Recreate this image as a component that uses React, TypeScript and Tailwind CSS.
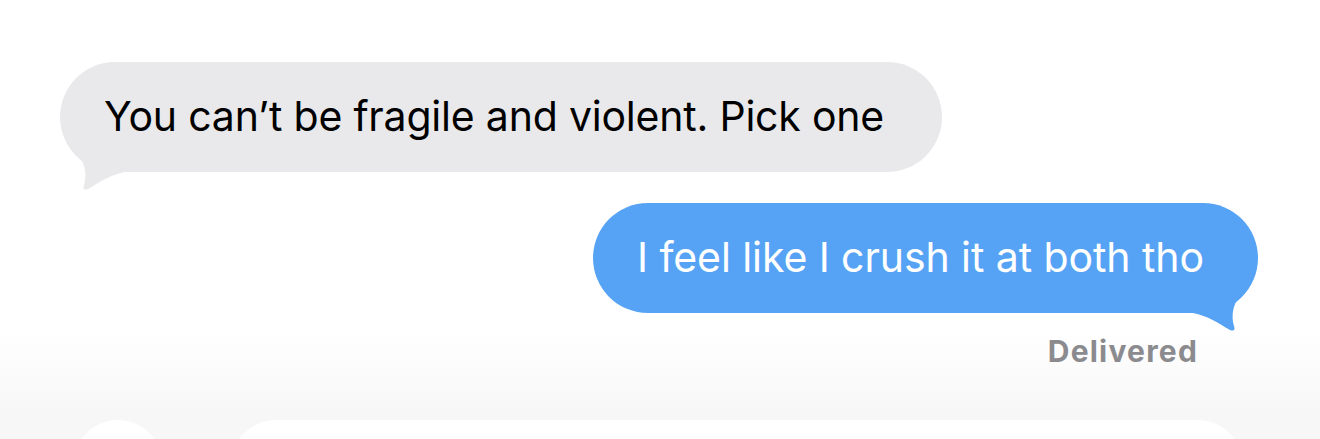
import React from 'react'

function Tail({ color, flip }: { color: string; flip?: boolean }) {
  // drawn in the gray bubble's page coordinates, mirrored for the outgoing one
  return (
    <svg
      viewBox="70 150 60 45"
      width={60}
      height={45}
      className={flip ? 'absolute right-[10px] top-[88px] -scale-x-100' : 'absolute left-[10px] top-[88px]'}
    >
      <path
        d="M 79,156 C 85,164 87,175 84,185 Q 82,191 88,189 C 100,182 110,175 125,172 L 125,158 Z"
        fill={color}
      />
    </svg>
  )
}

export default function App() {
  return (
    <div
      className="relative h-[439px] w-full overflow-hidden bg-[linear-gradient(to_bottom,#ffffff_330px,#f7f7f7_410px)]"
      style={{ fontFamily: 'Inter, "Noto Sans", sans-serif' }}
    >
      <div className="flex flex-col pt-[62px]">
        <div className="relative ml-[60px] flex h-[110px] w-[882px] items-center rounded-full bg-[#e9e9eb] pl-[44px]">
          <Tail color="#e9e9eb" />
          <span className="relative text-[41px] tracking-[-0.005em] text-black">
            You can’t be fragile and violent. Pick one
          </span>
        </div>

        <div className="relative mr-[62px] mt-[31px] flex h-[110px] w-[665px] items-center self-end rounded-full bg-[#56a3f5] pl-[44px]">
          <Tail color="#56a3f5" flip />
          <span className="relative text-[41px] tracking-[-0.002em] text-white">
            I feel like I crush it at both tho
          </span>
        </div>

        <div className="mr-[122px] mt-[20px] self-end text-[30px] font-bold leading-[36px] tracking-[0.04em] text-[#8b8b8f]">
          Delivered
        </div>

        <div className="mt-[51px] flex gap-[68px] pl-[73px]">
          <div className="h-[90px] w-[90px] rounded-full bg-white" />
          <div className="h-[90px] w-[1012px] rounded-[45px] bg-white" />
        </div>
      </div>
    </div>
  )
}
